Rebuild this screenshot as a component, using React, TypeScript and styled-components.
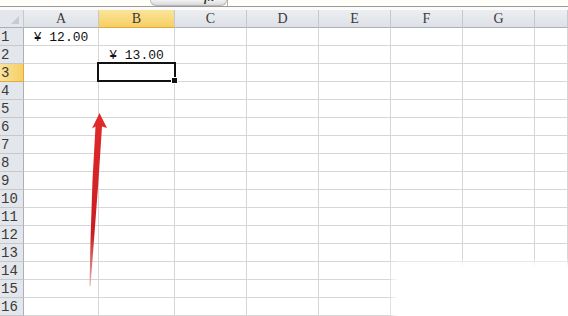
import React from "react";
import styled, { createGlobalStyle, css } from "styled-components";

const Global = createGlobalStyle`
  html, body { margin: 0; padding: 0; background: #ffffff; overflow: hidden; }
  body { width: 568px; height: 316px; }
`;

const COLS = ["A", "B", "C", "D", "E", "F", "G", ""];
const ROWS = Array.from({ length: 16 }, (_, i) => i + 1);
const SEL_COL = "B";
const SEL_ROW = 3;

const data: Record<string, string> = {
  A1: "¥ 12.00",
  B2: "¥ 13.00",
};

const Page = styled.div`
  position: relative;
  width: 568px;
  height: 316px;
  overflow: hidden;
  display: flex;
  flex-direction: column;
  background: #fff;
`;

const FormulaStrip = styled.div`
  height: 6px;
  display: flex;
  align-items: flex-start;
  background: #fffef8;
  border-bottom: 1px solid #9a9a9a;
  overflow: hidden;
`;

const NameBox = styled.div`
  width: 150px;
  height: 6px;
  overflow: hidden;
  display: flex;
  justify-content: center;
  font-family: "Liberation Mono", monospace;
  font-size: 13px;
  color: #222;
  span {
    margin-top: -10px;
    margin-left: -16px;
    line-height: 14px;
  }
`;

const FxButton = styled.div`
  width: 75px;
  height: 5px;
  border: 1px solid #b9b9b9;
  border-top: none;
  border-radius: 0 0 14px 14px;
  background: linear-gradient(#f3f3f3, #d9d9d9);
  display: flex;
  justify-content: flex-end;
  overflow: hidden;
  font-family: "Liberation Serif", serif;
  font-style: italic;
  font-weight: bold;
  font-size: 12px;
  color: #333;
  span {
    margin-top: -9px;
    margin-right: 12px;
    line-height: 12px;
  }
`;

const FormulaInput = styled.div`
  flex: 1;
  height: 6px;
  border-left: 1px solid #b0b0b0;
  background: #fffef8;
`;

const Gap = styled.div`
  height: 3px;
  background: #fbfbfb;
`;

const Sheet = styled.div`
  display: grid;
  grid-template-columns: 24px 75px 76px 72px 72px 72px 72px 72px 1fr;
  grid-auto-rows: 18px;
`;

const headerBase = css`
  box-sizing: border-box;
  font-family: "Liberation Mono", "DejaVu Sans Mono", monospace;
  font-size: 13px;
  color: #333;
  display: flex;
  align-items: center;
  border-right: 1px solid #c5c9cf;
  border-bottom: 1px solid #a9b0b9;
`;

const Corner = styled.div`
  ${headerBase};
  position: relative;
  background: #e3e6ea;
  &::after {
    content: "";
    position: absolute;
    right: 4px;
    bottom: 3px;
    width: 0;
    height: 0;
    border-left: 8px solid transparent;
    border-bottom: 8px solid #c7cbd1;
  }
`;

const ColHead = styled.div<{ $sel: boolean }>`
  ${headerBase};
  justify-content: center;
  padding-top: 1px;
  font-family: "Liberation Serif", "DejaVu Serif", serif;
  font-size: 14px;
  color: #3a3a3a;
  background: ${(p) =>
    p.$sel
      ? "linear-gradient(#fbe49a, #f6cf63)"
      : "linear-gradient(#eceef1, #dde1e6)"};
  border-bottom-color: ${(p) => (p.$sel ? "#e2a93d" : "#a9b0b9")};
`;

const RowHead = styled.div<{ $sel: boolean }>`
  ${headerBase};
  justify-content: flex-start;
  padding-left: 1px;
  padding-top: 1px;
  font-size: 14px;
  color: #3a3a3a;
  background: ${(p) =>
    p.$sel ? "linear-gradient(90deg, #fbe29a, #f6cf66)" : "#e3e6ea"};
  border-bottom-color: ${(p) => (p.$sel ? "#e2a93d" : "#c5c9cf")};
  border-right-color: ${(p) => (p.$sel ? "#e2a93d" : "#a9b0b9")};
`;

const Cell = styled.div<{ $sel: boolean }>`
  box-sizing: border-box;
  position: relative;
  border-right: 1px solid #d6d6d6;
  border-bottom: 1px solid #d6d6d6;
  font-family: "Liberation Mono", "Noto Sans CJK SC", monospace;
  font-size: 13px;
  color: #111;
  display: flex;
  align-items: center;
  justify-content: center;
  padding-top: 2px;
  white-space: nowrap;
  ${(p) =>
    p.$sel &&
    css`
      z-index: 2;
      &::before {
        content: "";
        position: absolute;
        left: -2px;
        top: -2px;
        right: -2px;
        bottom: -1px;
        border: 2px solid #111;
      }
      &::after {
        content: "";
        position: absolute;
        right: -4px;
        bottom: -3px;
        width: 5px;
        height: 5px;
        background: #111;
        border: 1px solid #fff;
      }
    `}
`;

const Arrow = styled.svg`
  position: absolute;
  left: 0;
  top: 0;
  pointer-events: none;
  z-index: 5;
`;

const Fade = styled.div`
  position: absolute;
  left: 393px;
  top: 262px;
  width: 200px;
  height: 70px;
  background: #fff;
  filter: blur(3px);
  z-index: 4;
  pointer-events: none;
`;

export default function App() {
  return (
    <>
      <Global />
      <Page>
        <FormulaStrip>
          <NameBox>
            <span>B3</span>
          </NameBox>
          <FxButton>
            <span>fx</span>
          </FxButton>
          <FormulaInput />
        </FormulaStrip>
        <Gap />
        <Sheet>
          <Corner />
          {COLS.map((c, i) => (
            <ColHead key={"h" + i} $sel={c === SEL_COL}>
              {c}
            </ColHead>
          ))}
          {ROWS.map((r) => (
            <React.Fragment key={r}>
              <RowHead $sel={r === SEL_ROW}>{r}</RowHead>
              {COLS.map((c, i) => (
                <Cell key={r + "-" + i} $sel={c === SEL_COL && r === SEL_ROW}>
                  {c ? data[c + r] ?? "" : ""}
                </Cell>
              ))}
            </React.Fragment>
          ))}
        </Sheet>
        <Fade />
        <Arrow width="568" height="316" viewBox="0 0 568 316">
          <defs>
            <linearGradient id="shaft" x1="0" y1="0" x2="0" y2="1">
              <stop offset="0" stopColor="#e22a2a" />
              <stop offset="0.7" stopColor="#c81e22" />
              <stop offset="1" stopColor="#e8b0b0" />
            </linearGradient>
          </defs>
          <path
            d="M99.5 113 L107 128 L102 126.5 L98.5 180 L94 240 L90.5 286 L89.5 286 L90.5 240 L92.5 180 L95.5 126.5 L92 128.5 Z"
            fill="url(#shaft)"
          />
        </Arrow>
      </Page>
    </>
  );
}
